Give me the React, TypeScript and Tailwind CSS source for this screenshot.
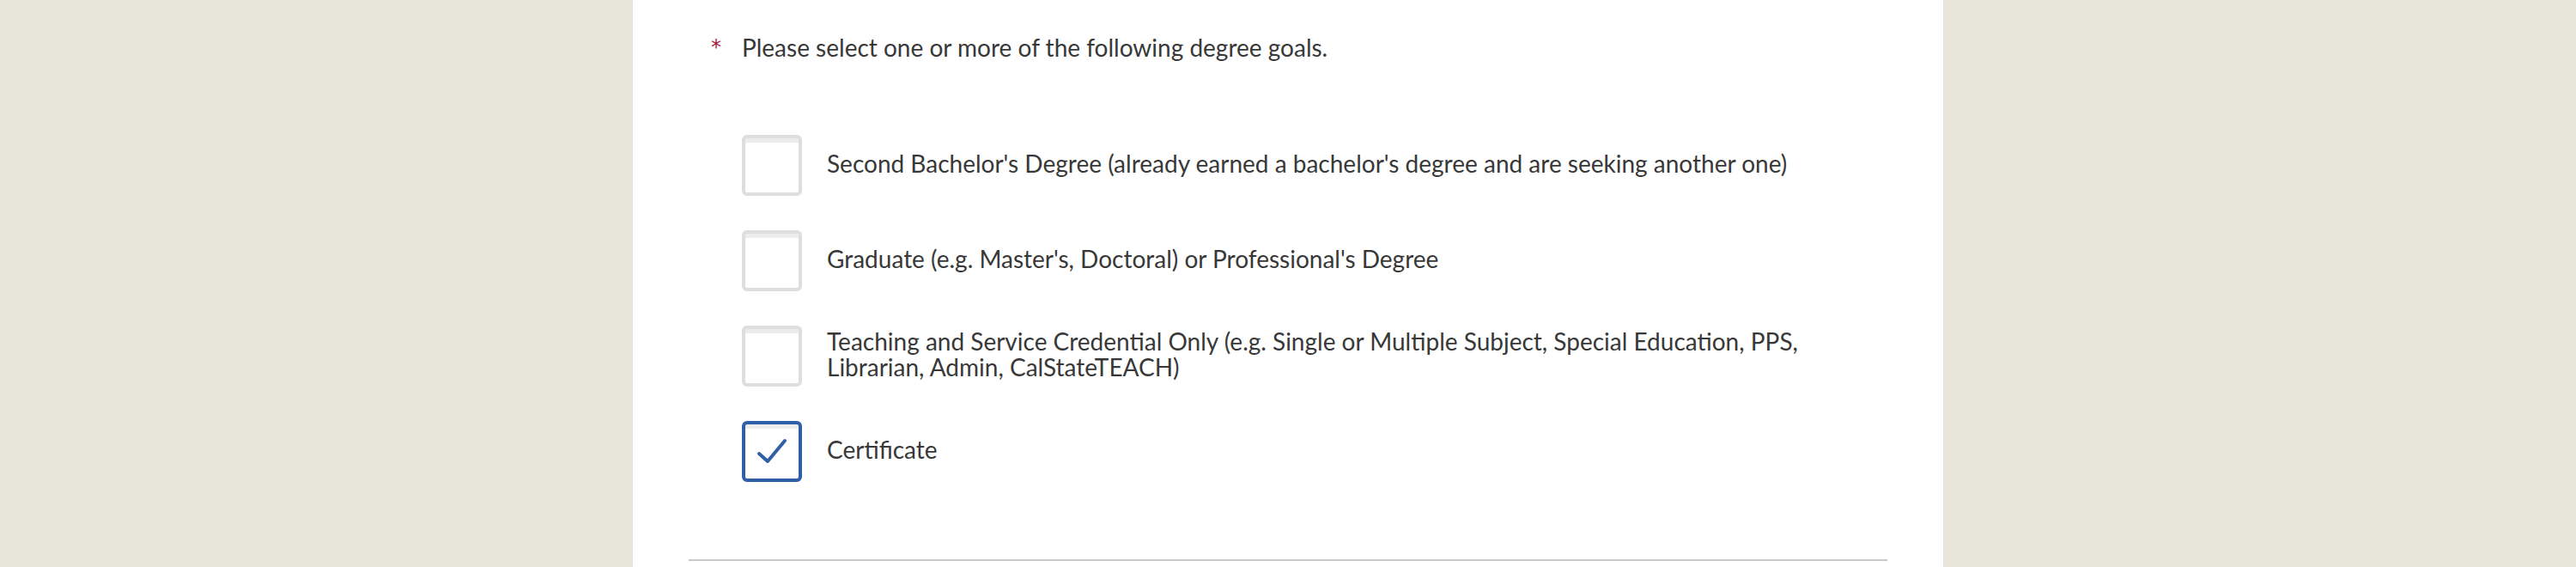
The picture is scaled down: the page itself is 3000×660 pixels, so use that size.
const options = [
  { label: "Second Bachelor's Degree (already earned a bachelor's degree and are seeking another one)", checked: false },
  { label: "Graduate (e.g. Master's, Doctoral) or Professional's Degree", checked: false },
  {
    label:
      'Teaching and Service Credential Only (e.g. Single or Multiple Subject, Special Education, PPS, Librarian, Admin, CalStateTEACH)',
    checked: false,
  },
  { label: 'Certificate', checked: true },
];

function Checkbox({ checked }: { checked: boolean }) {
  return (
    <div
      className={
        checked
          ? 'flex h-[71px] w-[70px] shrink-0 items-center justify-center rounded-[6px] border-[4px] border-[#2f5fa7] bg-white shadow-[inset_0_5px_0_#ececec]'
          : 'flex h-[71px] w-[70px] shrink-0 items-center justify-center rounded-[6px] border-[4px] border-[#dedede] bg-white shadow-[inset_0_5px_0_#ececec]'
      }
    >
      {checked && (
        <svg width="62" height="63" viewBox="0 0 62 63" fill="none">
          <path d="M16 34 L26 43 L46 19" stroke="#2f5fa7" strokeWidth="4" strokeLinecap="round" strokeLinejoin="round" />
        </svg>
      )}
    </div>
  );
}

export default function App() {
  return (
    <div className="flex h-[660px] w-full justify-center bg-[#e8e6da] font-['Lato','Open_Sans',sans-serif] text-[28px] leading-[30px] text-[#383838]">
      <div className="w-[1526px] bg-white px-[65px] pt-[40px]">
        {/* question heading */}
        <div className="flex items-center pl-[26px]">
          <span className="w-[12px] font-['DejaVu_Sans',sans-serif] text-[24px] leading-[30px] text-[#a6193c]">*</span>
          <span className="ml-[24px]">Please select one or more of the following degree goals.</span>
        </div>

        {/* options */}
        <div className="mt-[87px] flex flex-col gap-[40px] pl-[62px]">
          {options.map((o) => (
            <label key={o.label} className="flex items-center gap-[29px]">
              <Checkbox checked={o.checked} />
              <span className="-mt-[5px]">{o.label}</span>
            </label>
          ))}
        </div>

        <div className="mt-[90px] h-[2px] bg-[#c9c9c9]" />
      </div>
    </div>
  );
}
